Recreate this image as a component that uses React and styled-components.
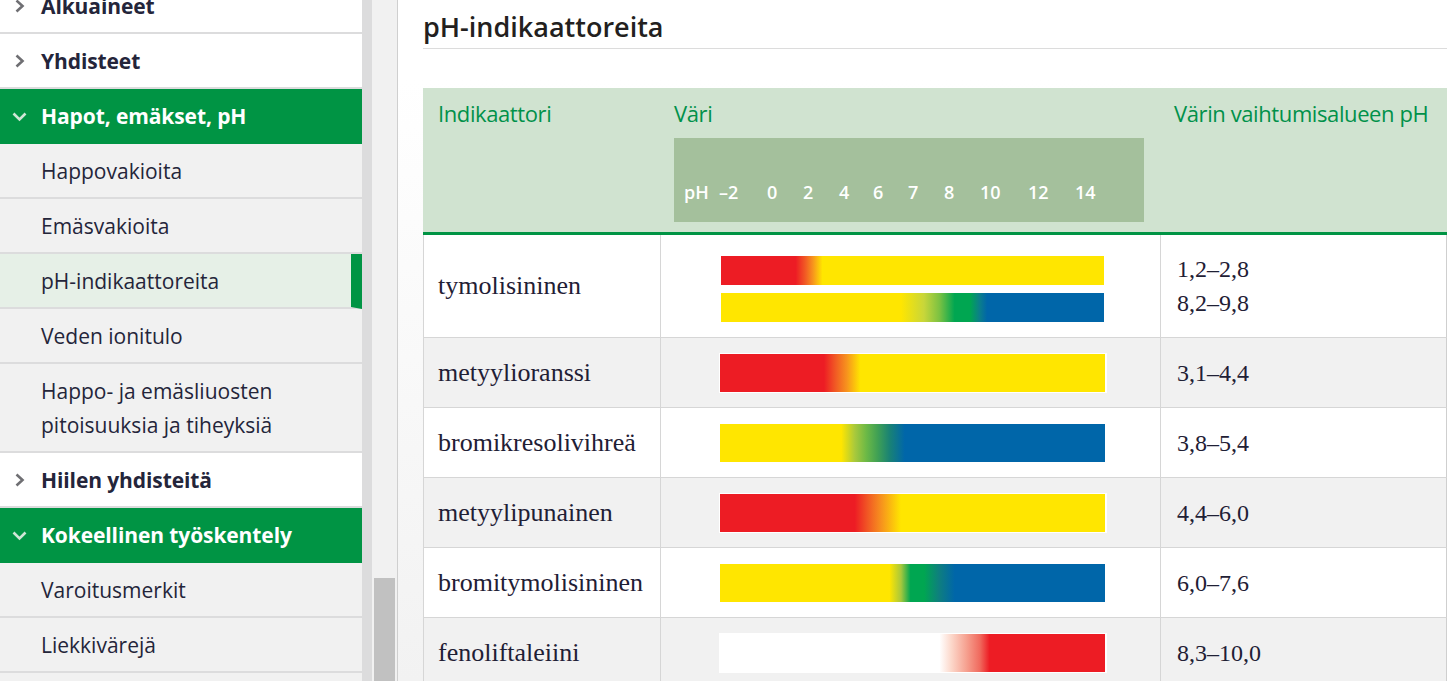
import React from 'react';
import styled, { createGlobalStyle } from 'styled-components';

const GlobalStyle = createGlobalStyle`
  html, body {
    margin: 0;
    padding: 0;
    background: #ffffff;
    overflow: hidden;
  }
  * { box-sizing: border-box; }
`;

const RED = '#ed1c24';
const ORANGE = '#f7941d';
const YELLOW = '#ffe600';
const GREEN = '#00a651';
const BLUE = '#0066a9';

const navItems = [
  { label: 'Alkuaineet', kind: 'section' },
  { label: 'Yhdisteet', kind: 'section' },
  { label: 'Hapot, emäkset, pH', kind: 'open' },
  { label: 'Happovakioita', kind: 'sub' },
  { label: 'Emäsvakioita', kind: 'sub' },
  { label: 'pH-indikaattoreita', kind: 'sub', active: true },
  { label: 'Veden ionitulo', kind: 'sub' },
  { label: ['Happo- ja emäsliuosten', 'pitoisuuksia ja tiheyksiä'], kind: 'sub' },
  { label: 'Hiilen yhdisteitä', kind: 'section' },
  { label: 'Kokeellinen työskentely', kind: 'open' },
  { label: 'Varoitusmerkit', kind: 'sub' },
  { label: 'Liekkivärejä', kind: 'sub' },
  { label: '', kind: 'sub' },
];

const scaleLabels = [
  { text: 'pH', w: 35 },
  { text: '–2', w: 48 },
  { text: '0', w: 36 },
  { text: '2', w: 36 },
  { text: '4', w: 34 },
  { text: '6', w: 35 },
  { text: '7', w: 36 },
  { text: '8', w: 36 },
  { text: '10', w: 48 },
  { text: '12', w: 47 },
  { text: '14', w: 30 },
];

const indicators = [
  {
    name: 'tymolisininen',
    tall: true,
    bars: [
      `${RED} 0%, ${RED} 19.5%, #f15a24 22%, ${ORANGE} 24%, ${YELLOW} 26.5%, ${YELLOW} 100%`,
      `${YELLOW} 0%, ${YELLOW} 47%, #c8d63a 53%, #7cc242 57%, ${GREEN} 61%, ${GREEN} 65%, #0b7f8a 67.5%, ${BLUE} 69.5%, ${BLUE} 100%`,
    ],
    ranges: ['1,2–2,8', '8,2–9,8'],
  },
  {
    name: 'metyylioranssi',
    bars: [`${RED} 0%, ${RED} 27%, #f15a24 30%, ${ORANGE} 33%, ${YELLOW} 36.5%, ${YELLOW} 100%`],
    ranges: ['3,1–4,4'],
  },
  {
    name: 'bromikresolivihreä',
    bars: [`${YELLOW} 0%, ${YELLOW} 31.5%, #a9c93c 35%, #6cb946 38%, #3fa055 41%, #1a8374 44%, ${BLUE} 48%, ${BLUE} 100%`],
    ranges: ['3,8–5,4'],
  },
  {
    name: 'metyylipunainen',
    bars: [`${RED} 0%, ${RED} 35%, #f15a24 38.5%, ${ORANGE} 42%, ${YELLOW} 47%, ${YELLOW} 100%`],
    ranges: ['4,4–6,0'],
  },
  {
    name: 'bromitymolisininen',
    bars: [`${YELLOW} 0%, ${YELLOW} 44%, #a8c83c 47%, ${GREEN} 49.5%, ${GREEN} 53%, #0e7e80 57%, ${BLUE} 61%, ${BLUE} 100%`],
    ranges: ['6,0–7,6'],
  },
  {
    name: 'fenoliftaleiini',
    bars: [`#ffffff 0%, #ffffff 57%, #fcd9cc 60%, #f6a190 64%, #f06a5e 67.5%, ${RED} 70%, ${RED} 100%`],
    ranges: ['8,3–10,0'],
  },
];

const Closed = () => (
  <svg width="11" height="14" viewBox="0 0 11 14">
    <polyline points="2.5,1.5 8.5,7 2.5,12.5" fill="none" stroke="#6f6f73" strokeWidth="2.6" />
  </svg>
);

const Opened = () => (
  <svg width="15" height="11" viewBox="0 0 15 11">
    <polyline points="1.5,2.5 7.5,8.5 13.5,2.5" fill="none" stroke="#cfe6d6" strokeWidth="2.6" />
  </svg>
);

export default function App() {
  return (
    <>
      <GlobalStyle />
      <Page>
        <Sidebar>
          <NavList>
            {navItems.map((item, i) => (
              <NavRow key={i} $kind={item.kind} $active={item.active}>
                <Chevron>
                  {item.kind === 'section' && <Closed />}
                  {item.kind === 'open' && <Opened />}
                </Chevron>
                <NavText $bold={item.kind !== 'sub'}>
                  {Array.isArray(item.label)
                    ? item.label.map((l, j) => <span key={j}>{l}<br /></span>)
                    : item.label}
                </NavText>
              </NavRow>
            ))}
          </NavList>
        </Sidebar>
        <Gutter />
        <ScrollTrack>
          <ScrollThumb />
        </ScrollTrack>
        <Main>
          <Title>pH-indikaattoreita</Title>
          <Table>
            <HeadRow>
              <HeadCell>
                <HeadText>Indikaattori</HeadText>
              </HeadCell>
              <HeadCell>
                <HeadText>Väri</HeadText>
                <Scale>
                  {scaleLabels.map((s) => (
                    <ScaleLabel key={s.text} $w={s.w}>{s.text}</ScaleLabel>
                  ))}
                </Scale>
              </HeadCell>
              <HeadCell>
                <HeadText>Värin vaihtumisalueen pH</HeadText>
              </HeadCell>
            </HeadRow>
            {indicators.map((ind, i) => (
              <Row key={ind.name} $shade={i % 2 === 1} $tall={ind.tall}>
                <NameCell>{ind.name}</NameCell>
                <BarCell $tall={ind.tall}>
                  {ind.bars.map((stops, j) => (
                    <Bar key={j} $tall={ind.tall} style={{ backgroundImage: `linear-gradient(to right, ${stops})` }} />
                  ))}
                </BarCell>
                <RangeCell>
                  {ind.ranges.map((r) => (
                    <RangeLine key={r}>{r}</RangeLine>
                  ))}
                </RangeCell>
              </Row>
            ))}
          </Table>
        </Main>
      </Page>
    </>
  );
}

const Page = styled.div`
  display: flex;
  height: 681px;
  overflow: hidden;
  font-family: "Open Sans", "Noto Sans", sans-serif;
`;

const Sidebar = styled.nav`
  width: 362px;
  flex-shrink: 0;
  background: #f1f1f1;
  overflow: hidden;
`;

const NavList = styled.div`
  display: flex;
  flex-direction: column;
  margin-top: -21px;
`;

const NavRow = styled.div`
  display: flex;
  align-items: flex-start;
  min-height: 55px;
  padding: 10px 0 9px 0;
  border-bottom: 2px solid #dcdcdd;
  border-right: ${(p) => (p.$active ? '11px solid #009444' : '0')};
  background: ${(p) =>
    p.$kind === 'open' ? '#009444' : p.$kind === 'section' ? '#ffffff' : p.$active ? '#e6f0e7' : '#f1f1f1'};
  color: ${(p) => (p.$kind === 'open' ? '#ffffff' : '#24253a')};
  ${(p) => p.$kind === 'open' && 'border-bottom-color: #009444;'}
`;

const Chevron = styled.div`
  width: 41px;
  height: 34px;
  flex-shrink: 0;
  display: flex;
  align-items: center;
  justify-content: center;
  padding-right: 2px;
`;

const NavText = styled.div`
  font-size: 21px;
  font-weight: ${(p) => (p.$bold ? 700 : 400)};
  line-height: 34px;
  letter-spacing: ${(p) => (p.$bold ? '-0.1px' : '0')};
`;

const Gutter = styled.div`
  width: 10px;
  flex-shrink: 0;
  background: #dcdcdd;
`;

const ScrollTrack = styled.div`
  width: 26px;
  flex-shrink: 0;
  background: #f1f1f1;
  border-right: 1px solid #cfcfcf;
  display: flex;
  flex-direction: column;
  justify-content: flex-end;
  padding: 0 2px;
`;

const ScrollThumb = styled.div`
  height: 103px;
  background: #c1c1c1;
`;

const Main = styled.main`
  flex: 1;
  padding-left: 25px;
  background: linear-gradient(to bottom, #ffffff 0px, #ffffff 80px, #f2f2f2 100%);
`;

const Title = styled.h1`
  margin: 0;
  padding: 9px 0 4px 0;
  font-size: 27px;
  font-weight: 600;
  line-height: 35px;
  color: #231f20;
  border-bottom: 1px solid #dcdcdc;
`;

const Table = styled.div`
  margin-top: 39px;
  display: flex;
  flex-direction: column;
`;

const HeadRow = styled.div`
  display: grid;
  grid-template-columns: 236px 500px 1fr;
  height: 147px;
  background: #d0e3d0;
  border-bottom: 3px solid #009444;
`;

const HeadCell = styled.div`
  padding: 12px 15px 10px 15px;
  display: flex;
  flex-direction: column;
`;

const HeadText = styled.div`
  font-size: 22px;
  line-height: 26px;
  letter-spacing: -0.4px;
  color: #00914a;
`;

const Scale = styled.div`
  margin-top: 12px;
  width: 470px;
  height: 84px;
  background: #a4c09c;
  display: flex;
  align-items: flex-end;
  padding: 0 0 18px 10px;
`;

const ScaleLabel = styled.span`
  width: ${(p) => p.$w}px;
  flex-shrink: 0;
  color: #ffffff;
  font-size: 18px;
  font-weight: 600;
  line-height: 24px;
`;

const Row = styled.div`
  display: grid;
  grid-template-columns: 236px 500px 1fr;
  min-height: ${(p) => (p.$tall ? '103px' : '70px')};
  background: ${(p) => (p.$shade ? '#f1f1f1' : '#ffffff')};
  border-bottom: 1px solid #d6d6d6;
  border-left: 1px solid #d6d6d6;
  border-right: 1px solid #cfcfcf;
`;

const NameCell = styled.div`
  display: flex;
  align-items: center;
  padding-left: 14px;
  font-family: "Liberation Serif", "DejaVu Serif", serif;
  font-size: 26px;
  color: #1f2035;
`;

const BarCell = styled.div`
  border-left: 1px solid #d6d6d6;
  display: flex;
  flex-direction: column;
  justify-content: center;
  gap: 8px;
  padding-left: ${(p) => (p.$tall ? '60px' : '58px')};
  padding-top: ${(p) => (p.$tall ? '6px' : '0')};
`;

const Bar = styled.div`
  width: ${(p) => (p.$tall ? '383px' : '387px')};
  height: ${(p) => (p.$tall ? '29px' : '40px')};
  border: ${(p) => (p.$tall ? '0' : '1px solid #ffffff')};
  box-shadow: ${(p) => (p.$tall ? 'none' : '1px 0 0 #ffffff')};
`;

const RangeCell = styled.div`
  border-left: 1px solid #d6d6d6;
  display: flex;
  flex-direction: column;
  justify-content: center;
  padding-left: 16px;
  font-family: "Liberation Serif", "DejaVu Serif", serif;
  font-size: 24px;
  color: #1f2035;
`;

const RangeLine = styled.div`
  line-height: 34px;
`;
